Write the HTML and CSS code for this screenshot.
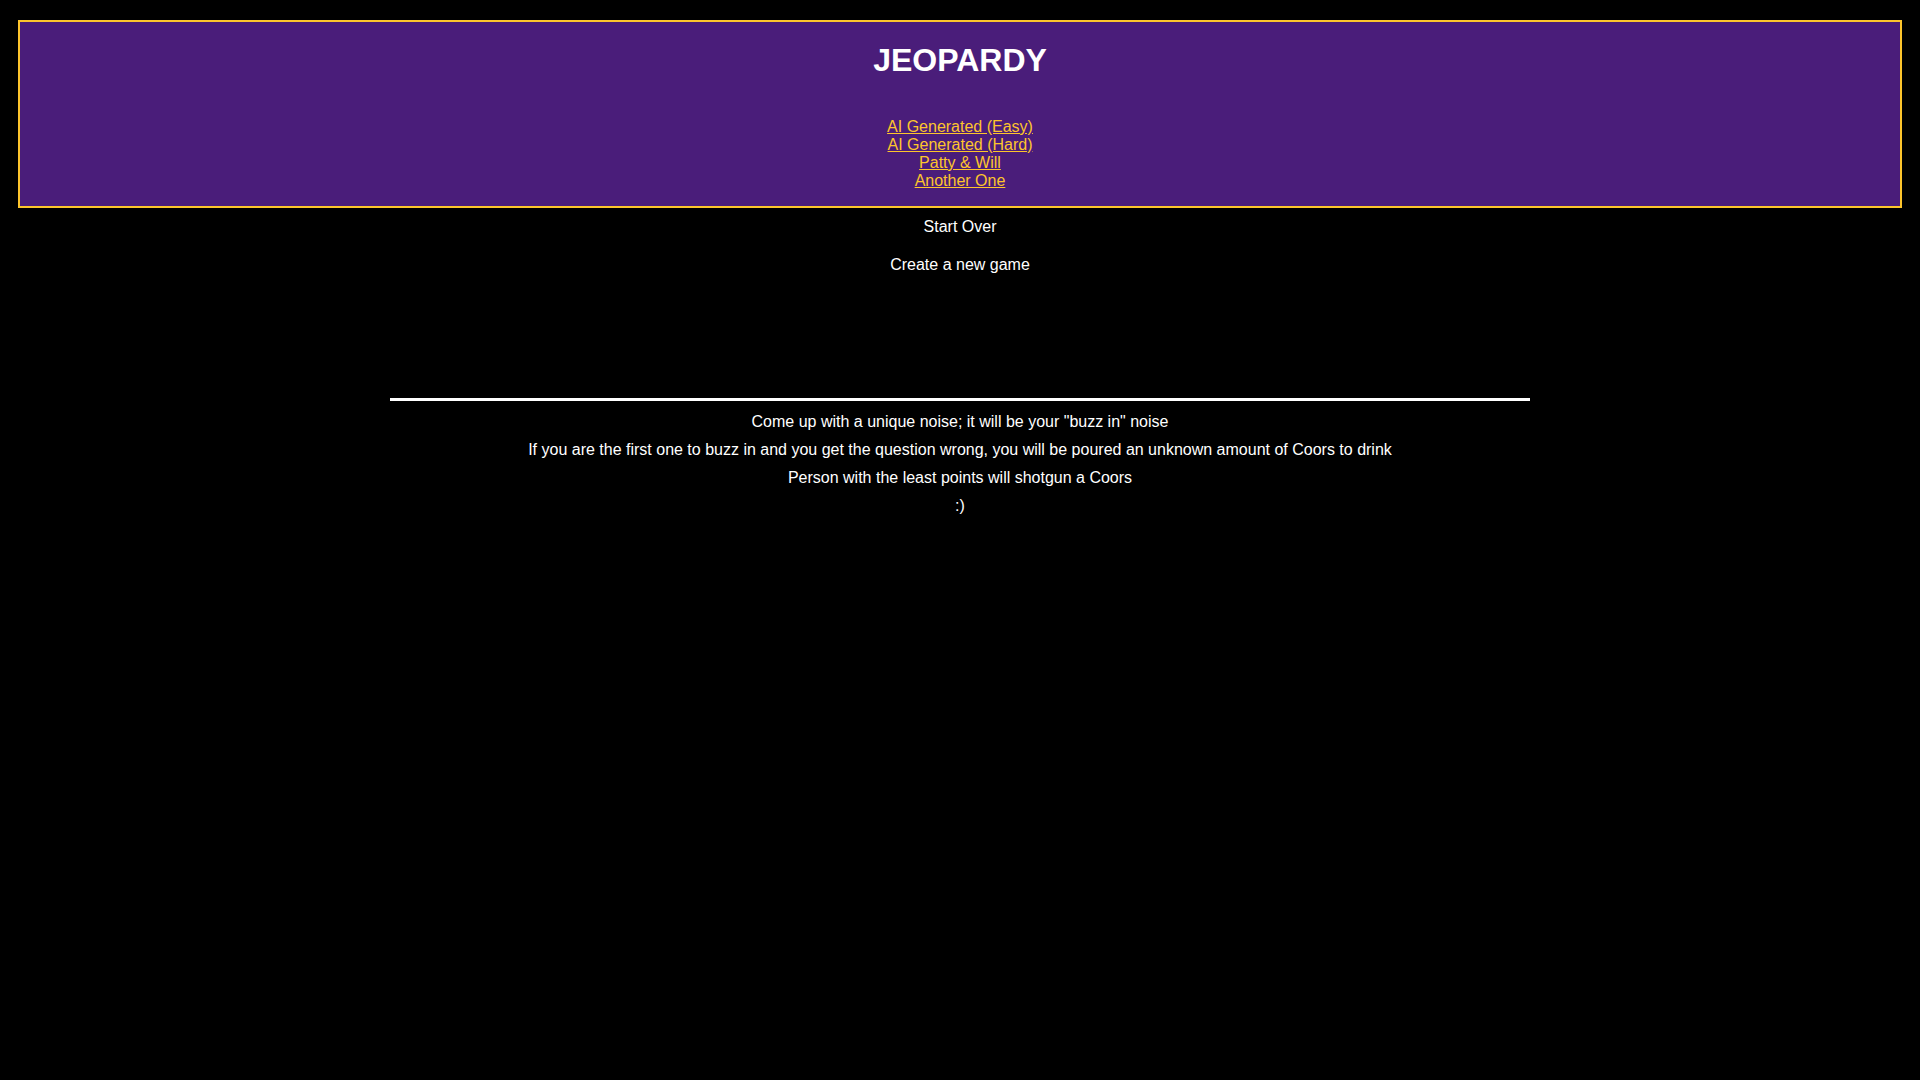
FILE: index.html
```html
<!DOCTYPE html>
<html lang="en">
<head>
<meta charset="utf-8">
<title>Jeopardy</title>
<link rel="stylesheet" href="styles.css">
</head>
<body>
<header class="banner">
  <h1 class="title">JEOPARDY</h1>
  <nav class="games">
    <a href="#">AI Generated (Easy)</a>
    <a href="#">AI Generated (Hard)</a>
    <a href="#">Patty &amp; Will</a>
    <a href="#">Another One</a>
  </nav>
</header>
<main class="content">
  <div class="action start">Start Over</div>
  <div class="action create">Create a new game</div>
  <hr class="divider">
  <section class="rules">
    <p>Come up with a unique noise; it will be your "buzz in" noise</p>
    <p>If you are the first one to buzz in and you get the question wrong, you will be poured an unknown amount of Coors to drink</p>
    <p>Person with the least points will shotgun a Coors</p>
    <p>:)</p>
  </section>
</main>
</body>
</html>
```
FILE: styles.css
```css
html, body {
  margin: 0;
  padding: 0;
  background: #000;
  color: #fff;
  font-family: "Liberation Sans", Arial, sans-serif;
  font-size: 16px;
}

.banner {
  margin: 20px 18px 0;
  border: 2px solid #fdc52c;
  background: #4a1d7a;
  text-align: center;
  padding: 20px 0 16px;
}

.title {
  margin: 0;
  font-size: 32px;
  line-height: 37px;
  font-weight: bold;
  color: #fff;
}

.games {
  margin-top: 39px;
  display: flex;
  flex-direction: column;
  align-items: center;
}

.games a {
  color: #fdc52c;
  text-decoration: underline;
  line-height: 18px;
}

.content {
  text-align: center;
}

.action {
  line-height: 18px;
}

.start {
  margin-top: 10px;
}

.create {
  margin-top: 20px;
}

.divider {
  width: 1140px;
  height: 3px;
  margin: 124px auto 0;
  border: none;
  background: #fff;
}

.rules {
  margin-top: 7px;
}

.rules p {
  margin: 0;
  line-height: 28px;
}
```
